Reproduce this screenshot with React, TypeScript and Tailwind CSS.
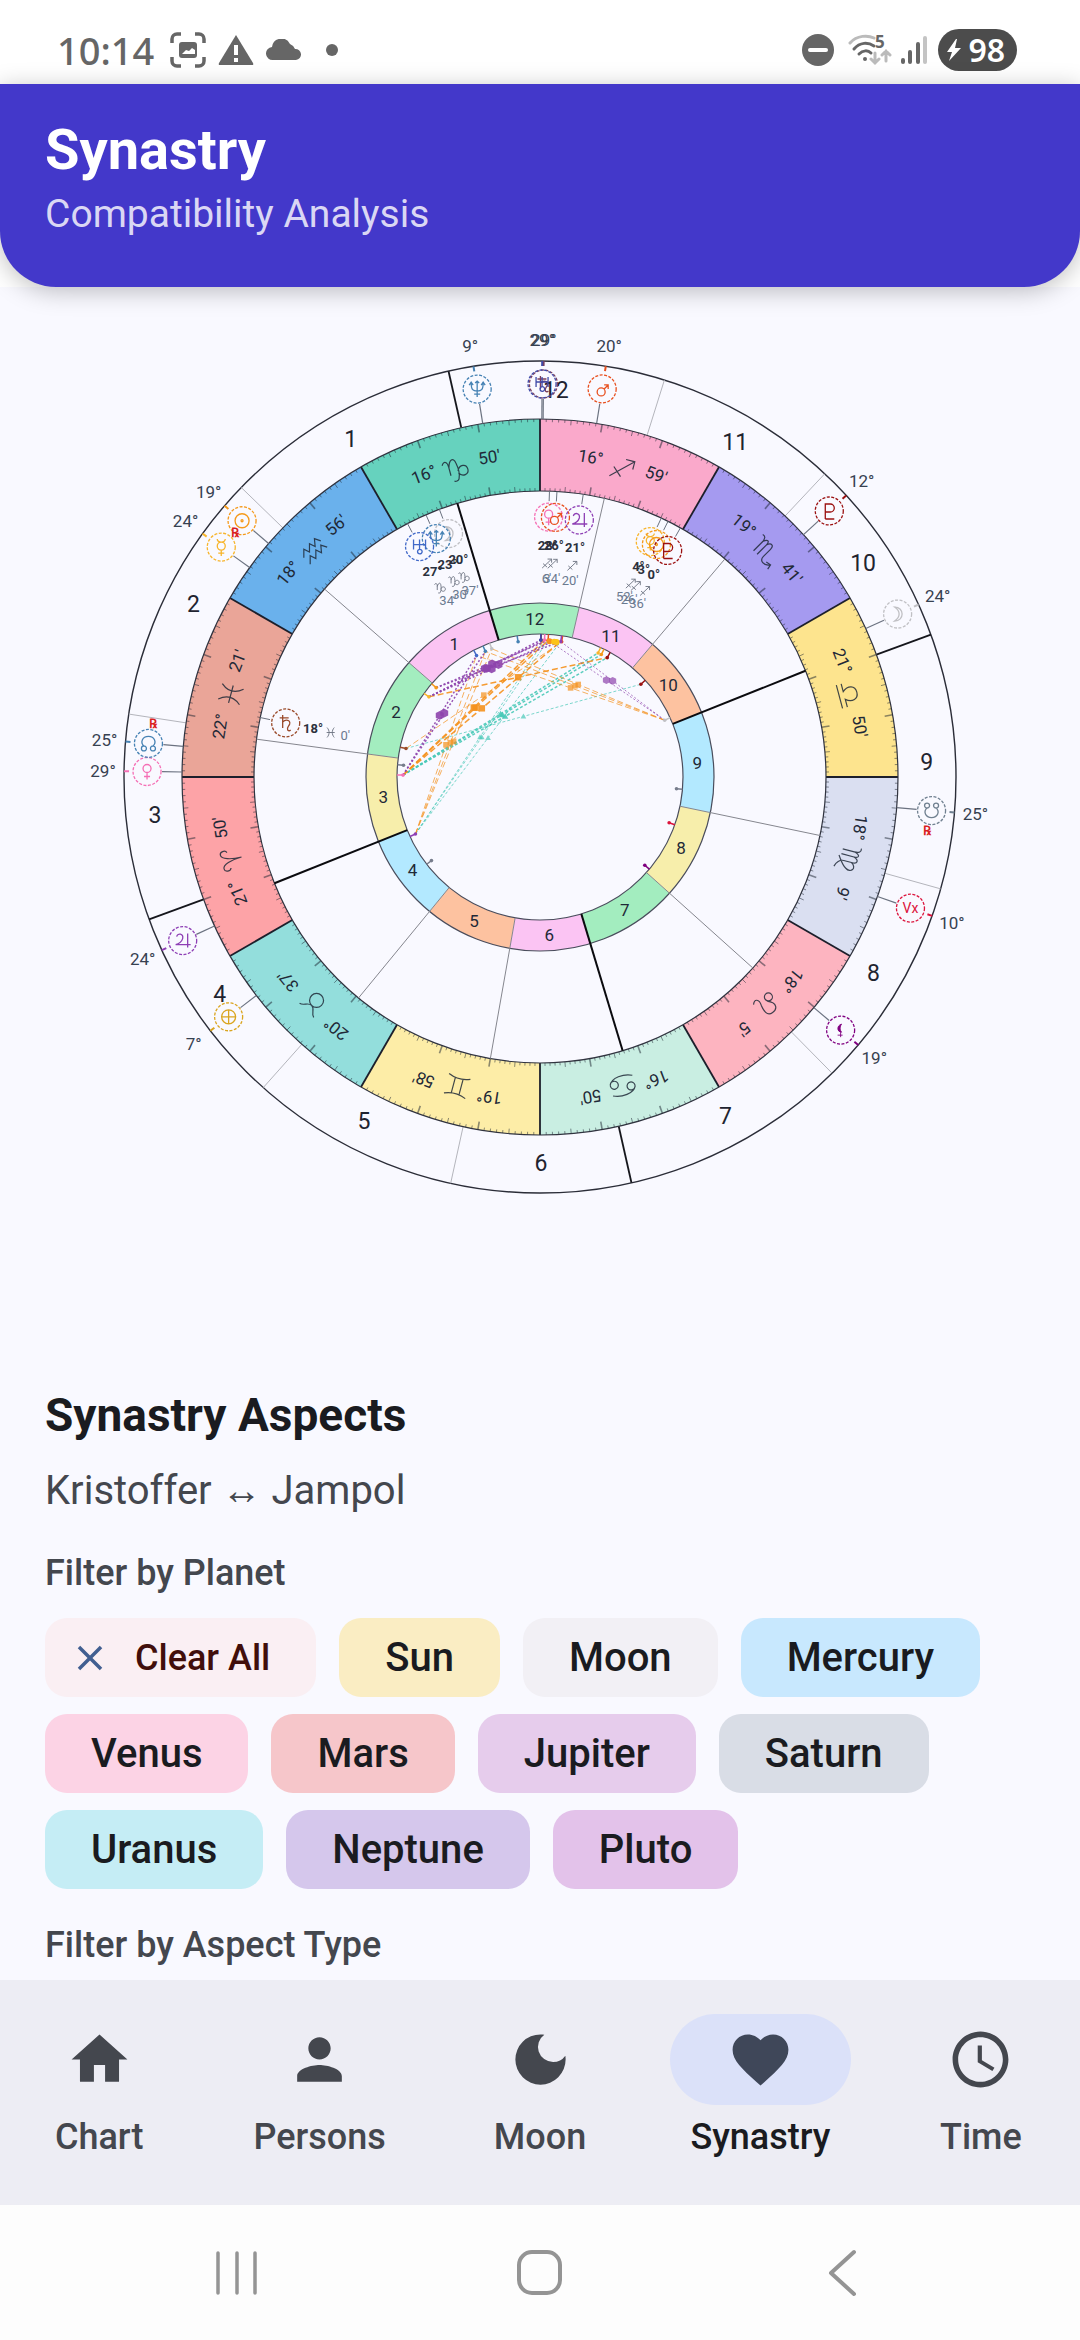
import React from 'react';
import { MdAccessTime, MdClose, MdDarkMode, MdFavorite, MdHome, MdPerson } from 'react-icons/md';

// ---------- chart data ----------

// Ecliptic longitude to chart position: 0 Aries on the left, running counter-clockwise
const point = (lon: number, r: number) => {
    const a = (lon * Math.PI) / 180;
    return { x: -r * Math.cos(a), y: r * Math.sin(a) };
};

const R = { outer: 416, signOuter: 358, signInner: 286, houseOuter: 174, houseInner: 143, pin: 137 };

const SIGNS = [
    { id: 'aries', fill: '#fda3a7', deg: "21°", min: "50'" },
    { id: 'taurus', fill: '#93dedc', deg: "20°", min: "37'" },
    { id: 'gemini', fill: '#fdeda7', deg: "19°", min: "58'" },
    { id: 'cancer', fill: '#c9eee2', deg: "16°", min: "50'" },
    { id: 'leo', fill: '#fdb4c0', deg: "18°", min: "5'" },
    { id: 'virgo', fill: '#dadff1', deg: "18°", min: "9'" },
    { id: 'libra', fill: '#fde48e', deg: "21°", min: "50'" },
    { id: 'scorpio', fill: '#a59af0', deg: "19°", min: "41'" },
    { id: 'sagittarius', fill: '#faa9cb', deg: "16°", min: "59'" },
    { id: 'capricorn', fill: '#66d2be', deg: "16°", min: "50'" },
    { id: 'aquarius', fill: '#6ab1ec', deg: "18°", min: "56'" },
    { id: 'pisces', fill: '#eaa598', deg: "22°", min: "21'" },
];

const SIGN_PATHS: Record<string, string> = {
    aries: 'M0 11C0 0-3-9-7-9C-11-9-11-3-8-2M0 11C0 0 3-9 7-9C11-9 11-3 8-2',
    taurus: 'M-7 4a7 7 0 1 0 14 0a7 7 0 1 0-14 0M-10-10C-5-9-5-3 0-3S5-9 10-10',
    gemini: 'M-11-10C-4-7 4-7 11-10M-11 10C-4 7 4 7 11 10M-4-8V8M4-8V8',
    cancer: 'M-12-2a4 4 0 1 0 8 0a4 4 0 1 0-8 0M-12-3C-9-10 4-11 12-7M4 3a4 4 0 1 0 8 0a4 4 0 1 0-8 0M12 4C9 11-4 12-12 8',
    leo: 'M-10 3a4 4 0 1 0 8 0a4 4 0 1 0-8 0M-2 1C-9-8-3-12 2-11C9-10 7-3 5 2C2 8 5 12 10 8',
    virgo: 'M-14-9C-11-10-9-8-9-3V9M-9-4C-7-10-4-9-4-4V9M-4-4C-2-10 2-9 2-4V5C2 9 6 12 10 13M2-3C6-10 13-5 9 1C7 5 2 8-2 11',
    libra: 'M-12 10H12M-12 5H-4C-9-1-7-8 0-8S9-1 4 5H12',
    scorpio: 'M-14-9C-11-10-9-8-9-3V9M-9-4C-7-10-4-9-4-4V9M-4-4C-2-10 2-9 2-4V6C2 12 9 13 13 7M8 8L13 7L14 12',
    sagittarius: 'M-11 11L10-9M1-9H10V-1M-9 1L0 9',
    capricorn: 'M-14-6C-11-11-8-8-8-3V6M-8-2C-6-10-1-12 0-5C1 0 1 7-1 11C-2 13-5 13-6 12M0 3C3-3 10-2 10 4C10 9 3 11 0 5',
    aquarius: 'M-12-2L-6-8L-4-2L2-8L4-2L9-8L12-2M-12 7L-6 1L-4 7L2 1L4 7L9 1L12 7',
    pisces: 'M-8-11C-2-4-2 4-8 11M8-11C2-4 2 4 8 11M-9 0H9',
};

const PLANET_PATHS: Record<string, string> = {
    sun: 'M-7 0a7 7 0 1 0 14 0a7 7 0 1 0-14 0M-1 0a1 1 0 1 0 2 0a1 1 0 1 0-2 0',
    moon: 'M-3-7C7-7 7 7-3 7C3 3 3-3-3-7Z',
    mercury: 'M-4-1a4 4 0 1 0 8 0a4 4 0 1 0-8 0M-4-8C-4-4 4-4 4-8M0 3V9M-3 6H3',
    venus: 'M-4-3a4 4 0 1 0 8 0a4 4 0 1 0-8 0M0 1V8M-3 5H3',
    mars: 'M-5 3a4 4 0 1 0 8 0a4 4 0 1 0-8 0M2 0L6-4M2-4H6V0',
    jupiter: 'M-6-4C-5-8 1-7 0-2C-1 1-3 3-7 4H8M5-7V7',
    saturn: 'M-3-8V5M-6-5H3M-3-1C0-4 5-3 4 1C3 4 1 4 2 7C3 8 4 8 5 7',
    uranus: 'M-6-7V3M6-7V3M-6-2H6M0-7V3M-2 5a2.300 2.300 0 1 0 4.600 0a2.300 2.300 0 1 0-4.600 0',
    neptune: 'M-6-6C-6 1-4 2 0 2S6 1 6-6M0-8V8M-3 5H3M-8-4L-6-7L-4-4M4-4L6-7L8-4M-2-6L0-8L2-6',
    pluto: 'M-4 8V-7H1a4 4 0 0 1 0 8H-4M-4 8H5',
    node: 'M-4 3C-9-1-6-7 0-7S9-1 4 3M-7 5a2 2 0 1 0 5 0a2 2 0 1 0-5 0M2 5a2 2 0 1 0 5 0a2 2 0 1 0-5 0',
    southNode: 'M-4-3C-9 1-6 7 0 7S9 1 4-3M-7-5a2 2 0 1 0 5 0a2 2 0 1 0-5 0M2-5a2 2 0 1 0 5 0a2 2 0 1 0-5 0',
    fortune: 'M-7 0a7 7 0 1 0 14 0a7 7 0 1 0-14 0M-7 0H7M0-7V7',
    lilith: 'M1-6C-4-5-4 2 1 2C-1 0-1-4 1-6ZM0 2V7M-3 5H2',
};

interface Planet {
    id: string;
    lon: number;
    color: string;
    deg: string;
    min?: string;
    sign?: string;
    retro?: boolean;
    pin?: string;
}

const OUTER_PLANETS: Planet[] = [
    { id: 'neptune', lon: 279.2, color: '#4682b4', deg: '9°' },
    { id: 'saturn', lon: 269.5, color: '#7a3f5c', deg: '29°' },
    { id: 'uranus', lon: 269.7, color: '#3f4aa8', deg: '29°' },
    { id: 'mars', lon: 260.9, color: '#e8501f', deg: '20°' },
    { id: 'pluto', lon: 222.6, color: '#9b1010', deg: '12°' },
    { id: 'moon', lon: 204.5, color: '#c0c0c4', deg: '24°' },
    { id: 'southNode', lon: 175.1, color: '#708090', deg: '25°', retro: true, pin: '#777d8c' },
    { id: 'vertex', lon: 160.5, color: '#dc143c', deg: '10°' },
    { id: 'lilith', lon: 139.9, color: '#800080', deg: '19°' },
    { id: 'fortune', lon: 37.6, color: '#daa520', deg: '7°', pin: '#777d8c' },
    { id: 'jupiter', lon: 24.6, color: '#8e3fb5', deg: '24°' },
    { id: 'venus', lon: 359.2, color: '#f56fb5', deg: '29°' },
    { id: 'node', lon: 355.1, color: '#4682b4', deg: '25°', retro: true, pin: '#777d8c' },
    { id: 'sun', lon: 319.3, color: '#f59a1b', deg: '19°' },
    { id: 'mercury', lon: 324.2, color: '#f7b52c', deg: '24°', retro: true },
];

const INNER_PLANETS: Planet[] = [
    { id: 'moon', lon: 290.6, color: '#c0c0c4', deg: '20°', min: "37'", sign: 'capricorn' },
    { id: 'neptune', lon: 293.5, color: '#4682b4', deg: '23°', min: "30'", sign: 'capricorn' },
    { id: 'uranus', lon: 297.6, color: '#4169c8', deg: '27°', min: "34'", sign: 'capricorn' },
    { id: 'venus', lon: 268.1, color: '#f56fb5', deg: '28°', min: "6'", sign: 'sagittarius' },
    { id: 'mars', lon: 266.6, color: '#e8501f', deg: '26°', min: "34'", sign: 'sagittarius' },
    { id: 'jupiter', lon: 261.3, color: '#8e3fb5', deg: '21°', min: "20'", sign: 'sagittarius' },
    { id: 'mercury', lon: 244.9, color: '#f7b52c', deg: '4°', min: "52'", sign: 'sagittarius' },
    { id: 'sun', lon: 243.4, color: '#f59a1b', deg: '3°', min: "26'", sign: 'sagittarius' },
    { id: 'pluto', lon: 240.6, color: '#9b1010', deg: '0°', min: "36'", sign: 'sagittarius' },
    { id: 'saturn', lon: 348, color: '#9a4a2a', deg: '18°', min: "0'", sign: 'pisces' },
];

// Cusps of houses 1 to 12
const OUTER_CUSPS = [282.7, 315.9, 351.3, 20, 48.3, 77.6, 102.7, 134.6, 164.4, 200, 226.8, 252.6];
const INNER_CUSPS = [286.8, 318.9, 352.4, 21.8, 50.6, 80, 106.8, 138.1, 168.2, 201.8, 229.7, 257];
const HOUSE_FILLS = ['#fbc4f3', '#a3edbf', '#f7eeab', '#b3e9ff', '#fdc2a0', '#fbc4f3', '#a3edbf', '#f7eeab', '#b3e9ff', '#fdc2a0', '#fbc4f3', '#a3edbf'];

type AspectKind = 'sextile' | 'square' | 'trine';

interface Aspect {
    kind: AspectKind;
    from: number;
    to: number;
    strength: number;
}

const ASPECT_STYLE: Record<AspectKind, { color: string; dash: string }> = {
    sextile: { color: '#8e44ad', dash: '2 2' },
    square: { color: '#f5921e', dash: '6 3' },
    trine: { color: '#48c9b8', dash: '3 2' },
};

const ASPECTS: Aspect[] = [
    { kind: 'trine', from: 348, to: 222.6, strength: 1 },
    { kind: 'trine', from: 24.6, to: 268.1, strength: 1 },
    { kind: 'trine', from: 24.6, to: 266.6, strength: 1 },
    { kind: 'trine', from: 24.6, to: 261.3, strength: 1 },
    { kind: 'trine', from: 359.2, to: 244.9, strength: 2 },
    { kind: 'trine', from: 359.2, to: 243.4, strength: 2 },
    { kind: 'trine', from: 359.2, to: 240.6, strength: 2 },
    { kind: 'square', from: 348, to: 260.9, strength: 1 },
    { kind: 'square', from: 24.6, to: 290.6, strength: 1 },
    { kind: 'square', from: 24.6, to: 293.5, strength: 1 },
    { kind: 'square', from: 24.6, to: 297.6, strength: 1 },
    { kind: 'square', from: 204.5, to: 290.6, strength: 1 },
    { kind: 'square', from: 204.5, to: 293.5, strength: 1 },
    { kind: 'square', from: 204.5, to: 297.6, strength: 1 },
    { kind: 'square', from: 324.2, to: 240.6, strength: 2 },
    { kind: 'square', from: 359.2, to: 261.3, strength: 2 },
    { kind: 'square', from: 359.2, to: 266.6, strength: 2 },
    { kind: 'square', from: 359.2, to: 268.1, strength: 2 },
    { kind: 'sextile', from: 359.2, to: 293.5, strength: 2 },
    { kind: 'sextile', from: 359.2, to: 297.6, strength: 2 },
    { kind: 'sextile', from: 204.5, to: 261.3, strength: 1 },
    { kind: 'sextile', from: 204.5, to: 266.6, strength: 1 },
    { kind: 'sextile', from: 319.3, to: 261.3, strength: 2 },
    { kind: 'sextile', from: 319.3, to: 266.6, strength: 2 },
    { kind: 'sextile', from: 324.2, to: 264, strength: 2 },
    { kind: 'sextile', from: 324.2, to: 268.1, strength: 2 },
    { kind: 'sextile', from: 324.2, to: 269.6, strength: 2 },
];

// ---------- chart parts ----------

const ringSlice = (from: number, to: number, inner: number, outer: number) => {
    const a = point(from, outer);
    const b = point(to, outer);
    const c = point(to, inner);
    const d = point(from, inner);
    return `M${a.x} ${a.y}A${outer} ${outer} 0 0 0 ${b.x} ${b.y}L${c.x} ${c.y}A${inner} ${inner} 0 0 1 ${d.x} ${d.y}Z`;
};

const midLon = (from: number, to: number) => from + ((to - from + 360) % 360) / 2;

interface RadialProps {
    lon: number;
    from: number;
    to: number;
    color: string;
    width: number;
}

const Radial: React.FC<RadialProps> = ({ lon, from, to, color, width }) => {
    const a = point(lon, from);
    const b = point(lon, to);
    return <line x1={a.x} y1={a.y} x2={b.x} y2={b.y} stroke={color} strokeWidth={width} />;
};

interface LabelProps {
    lon: number;
    r: number;
    className: string;
    rotate?: boolean;
    children: React.ReactNode;
}

const Label: React.FC<LabelProps> = ({ lon, r, className, rotate, children }) => {
    const p = point(lon, r);
    return (
        <text
            transform={`translate(${p.x} ${p.y}) rotate(${rotate ? 270 - lon : 0})`}
            textAnchor="middle"
            dominantBaseline="central"
            className={className}
        >
            {children}
        </text>
    );
};

const PlanetBadge: React.FC<{ planet: Planet; r: number }> = ({ planet, r }) => {
    const p = point(planet.lon, r);
    return (
        <g transform={`translate(${p.x} ${p.y})`} stroke={planet.color} fill="none">
            <circle r="14" strokeWidth="1.3" strokeDasharray="3 1.5" />
            {planet.id === 'vertex' ? (
                <text textAnchor="middle" dominantBaseline="central" stroke="none" fill={planet.color} className="text-[14px]">
                    Vx
                </text>
            ) : (
                <path
                    d={PLANET_PATHS[planet.id]}
                    fill={planet.id === 'lilith' ? planet.color : 'none'}
                    strokeWidth={planet.id === 'lilith' ? 0.9 : 1.3}
                />
            )}
        </g>
    );
};

const SignRing: React.FC = () => (
    <g>
        {SIGNS.map((sign, i) => {
            const start = i * 30;
            const mid = point(start + 15, 320);
            return (
                <g key={sign.id}>
                    <path d={ringSlice(start, start + 30, R.signInner, R.signOuter)} fill={sign.fill} />
                    {Array.from({ length: 29 }, (_, n) => n + 1).map((n) => {
                        const size = n % 10 === 0 ? 8 : n % 5 === 0 ? 5 : 3;
                        const width = n % 10 === 0 ? 1.6 : 1;
                        return (
                            <g key={n} opacity="0.5">
                                <Radial lon={start + n} from={R.signOuter} to={R.signOuter - size} color="#1b2430" width={width} />
                                <Radial lon={start + n} from={R.signInner} to={R.signInner + size} color="#1b2430" width={width} />
                            </g>
                        );
                    })}
                    <Label lon={start + 21} r={324} rotate className="fill-[#1f2937] text-[17px]">{sign.deg}</Label>
                    <path
                        d={SIGN_PATHS[sign.id]}
                        transform={`translate(${mid.x} ${mid.y}) rotate(${255 - start})`}
                        fill="none"
                        stroke="#1f2937"
                        strokeWidth="1.2"
                        opacity="0.85"
                    />
                    <Label lon={start + 9} r={324} rotate className="fill-[#1f2937] text-[17px]">{sign.min}</Label>
                </g>
            );
        })}
        {SIGNS.map((sign, i) => (
            <Radial key={sign.id} lon={i * 30} from={R.signInner} to={R.signOuter} color="#1c1f2b" width={1.8} />
        ))}
        <circle r={R.signOuter} fill="none" stroke="#30333f" strokeWidth="1.2" />
        <circle r={R.signInner} fill="none" stroke="#30333f" strokeWidth="1.2" />
    </g>
);

const HouseRing: React.FC = () => (
    <g>
        {INNER_CUSPS.map((cusp, i) => {
            const next = INNER_CUSPS[(i + 1) % 12];
            return (
                <g key={cusp}>
                    <path d={ringSlice(cusp, next, R.houseInner, R.houseOuter)} fill={HOUSE_FILLS[i]} />
                    <Label lon={midLon(cusp, next)} r={158} className="fill-[#1f2937] text-[17px]">{i + 1}</Label>
                </g>
            );
        })}
        <circle r={R.houseOuter} fill="none" stroke="#4a4d5c" strokeWidth="1.2" />
        <circle r={R.houseInner} fill="none" stroke="#4a4d5c" strokeWidth="1.2" />
        {INNER_CUSPS.map((cusp, i) => (
            <Radial
                key={cusp}
                lon={cusp}
                from={R.houseInner}
                to={R.signInner}
                color={i % 3 === 0 ? '#0b0b0f' : '#85868e'}
                width={i % 3 === 0 ? 2 : 1}
            />
        ))}
    </g>
);

const AspectMarker: React.FC<{ kind: AspectKind; x: number; y: number; size: number }> = ({ kind, x, y, size }) => {
    const shapes = {
        sextile: 'M-1-.6L0-1.100L1-.6V.6L0 1.100L-1 .6Z',
        square: 'M-.8-.8H.8V.8H-.8Z',
        trine: 'M0-.8L.8.6H-.8Z',
    };
    return <path d={shapes[kind]} fill={ASPECT_STYLE[kind].color} transform={`translate(${x} ${y}) scale(${size})`} />;
};

const AspectLines: React.FC = () => (
    <g>
        {ASPECTS.map(({ kind, from, to, strength }) => {
            const a = point(from, R.pin);
            const b = point(to, R.pin);
            const { color, dash } = ASPECT_STYLE[kind];
            return (
                <g key={`${kind}-${from}-${to}`} opacity={strength === 2 ? 0.9 : 0.7}>
                    <line x1={a.x} y1={a.y} x2={b.x} y2={b.y} stroke={color} strokeWidth={strength === 2 ? 1.5 : 1} strokeDasharray={dash} />
                    <AspectMarker kind={kind} x={(a.x + b.x) / 2} y={(a.y + b.y) / 2} size={strength === 2 ? 4 : 3.5} />
                </g>
            );
        })}
        {[...OUTER_PLANETS, ...INNER_PLANETS].map((planet, i) => {
            const dot = point(planet.lon, R.pin);
            const color = planet.pin ?? planet.color;
            return (
                <g key={i}>
                    <Radial lon={planet.lon} from={R.houseInner} to={R.pin} color={color} width={1.5} />
                    <circle cx={dot.x} cy={dot.y} r="1.8" fill={color} />
                </g>
            );
        })}
        {[266, 264, 263].map((lon) => {
            const dot = point(lon, 136);
            return <circle key={lon} cx={dot.x} cy={dot.y} r="3" fill={lon === 266 ? '#f5921e' : '#fcc419'} />;
        })}
    </g>
);

const SynastryWheel: React.FC = () => (
    <svg viewBox="-540 -490 1080 1064" className="block w-full h-auto" role="img" aria-label="Synastry wheel">
        <circle r={R.outer} fill="none" stroke="#2b2d38" strokeWidth="1.4" />
        {OUTER_CUSPS.map((cusp, i) => (
            <g key={cusp}>
                <Radial
                    lon={cusp}
                    from={R.signOuter}
                    to={R.outer}
                    color={i % 3 === 0 ? '#15161c' : '#b4b5bc'}
                    width={i % 3 === 0 ? 1.8 : 1}
                />
                <Label lon={midLon(cusp, OUTER_CUSPS[(i + 1) % 12])} r={387} className="fill-[#1f2430] text-[23px]">{i + 1}</Label>
            </g>
        ))}
        <SignRing />
        <HouseRing />
        <AspectLines />
        {OUTER_PLANETS.map((planet) => {
            const retro = point(planet.lon - 3, 391);
            return (
                <g key={planet.id}>
                    <Radial lon={planet.lon} from={R.signOuter} to={378} color="#6b7280" width={1.2} />
                    <Radial lon={planet.lon} from={R.outer} to={R.outer - 5} color={planet.color} width={2} />
                    <PlanetBadge planet={planet} r={393} />
                    <Label lon={planet.lon} r={437} className="fill-[#374151] text-[17px]">{planet.deg}</Label>
                    {planet.retro && (
                        <text x={retro.x} y={retro.y} textAnchor="middle" dominantBaseline="central" className="fill-[#d92020] text-[13px] font-bold">
                            ℞
                        </text>
                    )}
                </g>
            );
        })}
        {INNER_PLANETS.map((planet) => {
            const glyph = point(planet.lon, 214);
            return (
                <g key={planet.id}>
                    <Radial lon={planet.lon} from={R.signInner} to={276} color="#6b7280" width={1} />
                    <PlanetBadge planet={planet} r={260} />
                    <Label lon={planet.lon} r={232} className="fill-[#2b303c] text-[13px] font-bold">{planet.deg}</Label>
                    <path
                        d={SIGN_PATHS[planet.sign!]}
                        transform={`translate(${glyph.x} ${glyph.y}) scale(0.45)`}
                        fill="none"
                        stroke="#6b7280"
                        strokeWidth="2"
                    />
                    <Label lon={planet.lon} r={199} className="fill-[#6b7a90] text-[13px]">{planet.min}</Label>
                </g>
            );
        })}
    </svg>
);

// ---------- device bars ----------

const StatusBar: React.FC = () => (
    <div className="flex h-[84px] items-center justify-between bg-white pt-4 pl-[57px] pr-[63px] text-[#666]">
        <div className="flex items-center">
            <span className="font-['Noto_Sans'] text-[38px] leading-[48px] font-medium">10:14</span>
            <svg width="36" height="36" viewBox="0 0 36 36" className="ml-4" fill="none" stroke="currentColor" strokeWidth="3.5">
                <path d="M2 11V7a5 5 0 0 1 5-5h4M25 2h4a5 5 0 0 1 5 5v4M34 25v4a5 5 0 0 1-5 5h-4M11 34H7a5 5 0 0 1-5-5v-4" />
                <rect x="9" y="10" width="18" height="16" rx="3" fill="currentColor" stroke="none" />
                <path d="M12 22l4-4 3 1 3-3 3 2v4z" fill="#fff" stroke="none" />
            </svg>
            <svg width="36" height="32" viewBox="0 0 36 32" className="ml-3">
                <path d="M18 1L35 29q1 2-1 2H2q-2 0-1-2z" fill="currentColor" />
                <path d="M18 11v10M18 24v4" stroke="#fff" strokeWidth="4" />
            </svg>
            <svg width="36" height="22" viewBox="0 0 36 22" className="ml-3" fill="currentColor">
                <path d="M7 21a6.500 6.500 0 0 1-1-13A9.500 9.500 0 0 1 24 5a8 8 0 0 1 5 5 5.500 5.500 0 0 1 1 11z" />
            </svg>
            <span className="ml-6 size-3 rounded-full bg-[#666]" />
        </div>
        <div className="flex items-center">
            <svg width="32" height="32" viewBox="0 0 32 32">
                <circle cx="16" cy="16" r="16" fill="currentColor" />
                <path d="M8 16h16" stroke="#fff" strokeWidth="4" strokeLinecap="round" />
            </svg>
            <svg width="44" height="48" viewBox="0 -8 44 48" className="ml-3.5" fill="none" strokeWidth="3" strokeLinecap="round">
                <path d="M2 9C9 1 20 1 26 4" stroke="#bbb" />
                <path d="M6 15C12 8 20 8 26 12M11 20C15 16 20 16 23 19" stroke="#666" />
                <circle cx="17" cy="25" r="2" fill="#666" />
                <path d="M27 19V29M23 25L27 29L31 25M38 27V17M34 21L38 17L42 21" stroke="#bbb" />
                <text x="27" y="14" fill="#666" className="font-['Noto_Sans'] text-[17px] font-bold">5</text>
            </svg>
            <svg width="28" height="30" viewBox="0 0 28 30" className="ml-2" strokeWidth="4" strokeLinecap="round">
                <path d="M3 25V27M10 17V27M18 9V27" stroke="#666" />
                <path d="M25 3V27" stroke="#c4c4c4" />
            </svg>
            <div className="ml-2.5 flex h-[42px] items-center rounded-full bg-[#4c4c4c] px-2 text-white">
                <svg width="16" height="24" viewBox="0 0 16 24" fill="currentColor">
                    <path d="M10 1L1 14h5l-3 9L15 10H9l2-9z" />
                </svg>
                <span className="ml-1.5 mr-1 font-['Noto_Sans'] text-[32px] leading-none font-semibold">98</span>
            </div>
        </div>
    </div>
);

const SystemNav: React.FC = () => (
    <div className="grid h-[135px] grid-cols-[316px_1fr_316px] items-center bg-[#fdfdfd] px-[79px] text-[#949494]">
        <button aria-label="Recents" className="flex justify-center">
            <svg width="46" height="48" viewBox="0 0 46 48" stroke="currentColor" strokeWidth="3.5" strokeLinecap="round">
                <path d="M4 4V44M23 4V44M41 4V44" />
            </svg>
        </button>
        <button aria-label="Home" className="flex justify-center">
            <svg width="48" height="48" viewBox="0 0 48 48" fill="none" stroke="currentColor" strokeWidth="4">
                <rect x="3" y="3" width="41" height="41" rx="13" />
            </svg>
        </button>
        <button aria-label="Back" className="flex justify-center">
            <svg width="32" height="48" viewBox="0 0 32 48" fill="none" stroke="currentColor" strokeWidth="4" strokeLinecap="round" strokeLinejoin="round">
                <path d="M27 3L4 24L27 45" />
            </svg>
        </button>
    </div>
);

// ---------- page ----------

const PLANET_FILTERS = [
    { name: 'Sun', bg: 'bg-[#faedc3]' },
    { name: 'Moon', bg: 'bg-[#f2f0f5]' },
    { name: 'Mercury', bg: 'bg-[#c8e8fe]' },
    { name: 'Venus', bg: 'bg-[#fcd3e5]' },
    { name: 'Mars', bg: 'bg-[#f6c6ca]' },
    { name: 'Jupiter', bg: 'bg-[#e6ccec]' },
    { name: 'Saturn', bg: 'bg-[#d9dde6]' },
    { name: 'Uranus', bg: 'bg-[#c5edf5]' },
    { name: 'Neptune', bg: 'bg-[#d5c7ec]' },
    { name: 'Pluto', bg: 'bg-[#e3c2ea]' },
];

const TABS = [
    { name: 'Chart', Icon: MdHome },
    { name: 'Persons', Icon: MdPerson },
    { name: 'Moon', Icon: MdDarkMode },
    { name: 'Synastry', Icon: MdFavorite },
    { name: 'Time', Icon: MdAccessTime },
];

const App: React.FC = () => {
    const activeTab = 'Synastry';

    return (
        <div className="flex min-h-screen flex-col bg-[#f9f9ff] font-['Roboto',sans-serif]">
            <StatusBar />
            <div className="relative z-10 bg-white">
                <header className="rounded-b-[56px] bg-[#4338ca] px-[45px] pt-[34px] pb-[47px] shadow-[0_4px_24px_rgba(0,0,0,0.25)]">
                    <h1 className="text-[56px] leading-[64px] font-bold text-white">Synastry</h1>
                    <p className="mt-[6px] text-[39px] leading-[52px] text-[#dad7f4]">Compatibility Analysis</p>
                </header>
            </div>

            <main className="flex-1">
                <SynastryWheel />
                <section className="px-[45px] pt-9 pb-[10px]">
                    <h2 className="text-[46px] leading-[56px] font-bold text-[#1a1b20]">Synastry Aspects</h2>
                    <p className="mt-5 text-[40px] leading-[56px] text-[#44474e]">Kristoffer ↔ Jampol</p>
                    <h3 className="mt-[30px] text-[36px] leading-[48px] font-medium text-[#44474e]">Filter by Planet</h3>
                    <div className="mt-[21px] flex flex-wrap gap-x-[23px] gap-y-[17px]">
                        <button className="flex h-[79px] items-center rounded-[22px] bg-[#faeff3] pl-6 pr-[46px] text-[36px] font-medium text-[#410e0b]">
                            <MdClose className="mr-6 size-[42px] text-[#415f91]" />
                            Clear All
                        </button>
                        {PLANET_FILTERS.map(({ name, bg }) => (
                            <button key={name} className={`h-[79px] rounded-[22px] px-[46px] text-[40px] font-medium text-[#1a1b20] ${bg}`}>
                                {name}
                            </button>
                        ))}
                    </div>
                    <h3 className="mt-8 text-[36px] leading-[48px] font-medium text-[#44474e]">Filter by Aspect Type</h3>
                </section>
            </main>

            <nav className="flex h-[225px] gap-[22px] bg-[#ededf4] pt-[34px] text-[#44474e]">
                {TABS.map(({ name, Icon }) => (
                    <button key={name} className="flex flex-1 flex-col items-center">
                        <span className={`flex h-[91px] w-[181px] items-center justify-center rounded-full ${name === activeTab ? 'bg-[#dbe1f9] text-[#3f4759]' : ''}`}>
                            <Icon className="size-[67px]" />
                        </span>
                        <span className={`mt-2 text-[36px] leading-[48px] font-medium ${name === activeTab ? 'text-[#1a1b20]' : ''}`}>{name}</span>
                    </button>
                ))}
            </nav>
            <SystemNav />
        </div>
    );
};

export default App;
